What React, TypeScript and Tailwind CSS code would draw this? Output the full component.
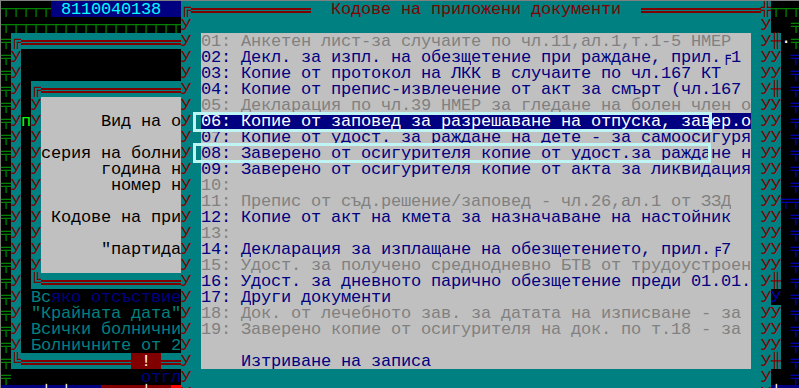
import React from 'react';

type Seg = { t: string; fg: string; bg: string };

const s = (t: string, fg: string, bg: string): Seg => ({ t, fg, bg });

// console palette
const RED = 'text-[#800000]';
const BLU = 'text-[#000080]';
const DIM = 'text-[#808080]';
const WHT = 'text-white';
const CYN = 'text-[#00ffff]';
const GRN = 'text-[#008000]';
const LGRN = 'text-[#00ff00]';
const BLK = 'text-black';
const TEA = 'text-[#008080]';
const DBL = 'text-[#0000b0]';

const BT = 'bg-[#008080]';
const BK = 'bg-black';
const BG = 'bg-[#c0c0c0]';
const BB = 'bg-[#000080]';
const BR = 'bg-[#800000]';
const BRR = 'bg-[#ff0000]';

const TITLE = 'Кодове на приложени документи';

// 0 = disabled, 1 = active, 2 = selected
const items: [string, number][] = [
  ['01: Анкетен лист-за случаите по чл.11,ал.1,т.1-5 НМЕР', 0],
  ['02: Декл. за изпл. на обезщетение при раждане, прил.╒1', 1],
  ['03: Копие от протокол на ЛКК в случаите по чл.167 КТ', 1],
  ['04: Копие от препис-извлечение от акт за смърт (чл.167', 1],
  ['05: Декларация по чл.39 НМЕР за гледане на болен член о', 0],
  ['06: Копие от заповед за разрешаване на отпуска, завер.о', 2],
  ['07: Копие от удост. за раждане на дете - за самоосигуря', 1],
  ['08: Заверено от осигурителя копие от удост.за раждане н', 1],
  ['09: Заверено от осигурителя копие от акта за ликвидация', 1],
  ['10:', 0],
  ['11: Препис от съд.решение/заповед - чл.26,ал.1 от ЗЗД', 0],
  ['12: Копие от акт на кмета за назначаване на настойник', 1],
  ['13:', 0],
  ['14: Декларация за изплащане на обезщетението, прил.╒7', 1],
  ['15: Удост. за получено среднодневно БТВ от трудоустроен', 0],
  ['16: Удост. за дневното парично обезщетение преди 01.01.', 1],
  ['17: Други документи', 1],
  ['18: Док. от лечебното зав. за датата на изписване - за', 0],
  ['19: Заверено копие от осигурителя на док. по т.18 - за', 0],
  ['', 0],
  ['    Изтриване на записа', 1],
];

const formText: Record<number, string> = {
  7: '      Вид на о',
  9: 'серия на болни',
  10: '      година н',
  11: '       номер н',
  13: ' Кодове на при',
  15: '      "партида',
};

const rep = (c: string, n: number) => c.repeat(n);

function leftCols(r: number): Seg[] {
  if (r === 0) return [s(rep('┬', 5), GRN, BK), s(' 8110040138  ', CYN, BB)];
  if (r === 1) return [s(rep('┬', 18), GRN, BK)];
  if (r === 24) return [s('    │ │   ', WHT, BB), s('    │  ', WHT, BR), s(' ', WHT, BRR)];
  const c0 = s('╤', GRN, BK);
  if (r === 23) return [c0, s(rep(' ', 13), BLU, BK), s('отгл', BLU, BK)];
  if (r === 2) return [c0, s('╔', RED, BT), s(rep('═', 16), RED, BT)];
  if (r === 22)
    return [c0, s('╚', RED, BT), s(rep('═', 11), RED, BT), s(' ! ', WHT, BR), s('══', RED, BT)];
  const c1 = s('У', RED, BT);
  if (r === 3 || r === 4) return [c0, c1, s(rep(' ', 16), BLK, BK)];
  const c2 = s(r === 7 ? 'п' : ' ', LGRN, BK);
  if (r === 18) return [c0, c1, c2, s('Вс', TEA, BK), s('яко отсъствие', BLU, BK)];
  if (r === 19) return [c0, c1, c2, s('"Крайната дата"', TEA, BK)];
  if (r === 20) return [c0, c1, c2, s('Всички болнични', TEA, BK)];
  if (r === 21) return [c0, c1, c2, s('Болничните от 2', TEA, BK)];
  if (r === 5) return [c0, c1, c2, s('╔', RED, BT), s(rep('═', 14), RED, BT)];
  if (r === 17) return [c0, c1, c2, s('╚', RED, BT), s(rep('═', 14), RED, BT)];
  const inner = formText[r] ?? '';
  return [c0, c1, c2, s('У', RED, BT), s(inner.padEnd(14), BLK, BG)];
}

function mainCols(r: number): Seg[] {
  if (r === 0)
    return [
      s('╔', RED, BT),
      s(rep('═', 12), RED, BT),
      s('  ', RED, BT),
      s(TITLE, RED, BT),
      s('  ', RED, BT),
      s(rep('═', 12), RED, BT),
    ];
  const edge = s('У', RED, BT);
  if (r === 1 || r >= 23) return [edge, s(rep(' ', 57), RED, BT)];
  const [text, kind] = items[r - 2];
  const fg = kind === 2 ? WHT : kind === 1 ? BLU : DIM;
  const bg = kind === 2 ? BB : BG;
  return [edge, s(' ', RED, BT), s(text.padEnd(55), fg, bg), s(' ', RED, BT)];
}

function rightCols(r: number): Seg[] {
  if (r === 0) return [s('╬', RED, BT), s(rep('┬', 3), GRN, BK)];
  if (r === 1) return [s('У', RED, BT), s('  ', WHT, BK), s('╤', GRN, BK)];
  if (r === 2) return [s('У╫', RED, BT), s('·', WHT, BK), s('╤', GRN, BK)];
  if (r === 24) return [s('У', RED, BT), s('│', WHT, BB), s('  ', WHT, BB)];
  const c77 =
    r === 23
      ? s(' ', RED, BK)
      : r === 18
        ? s('У', DBL, BK)
        : s(r === 5 || r === 17 || r === 22 ? '╫' : 'У', RED, BT);
  return [s('У', RED, BT), c77, s(r === 12 ? '╤' : ' ', DBL, BK), s('╤', DBL, BK)];
}

function Row({ segs }: { segs: Seg[] }) {
  return (
    <div className="flex h-4">
      {segs.flatMap((seg, si) =>
        Array.from(seg.t).map((ch, ci) =>
          ch === '═' ? (
            <span key={`${si}-${ci}`} className={`block w-[10px] h-4 shrink-0 pt-[7px] ${seg.bg}`}>
              <span className="block w-full h-[5px] border-y-2 border-[#800000]" />
            </span>
          ) : (
            <span
              key={`${si}-${ci}`}
              className={`block w-[10px] h-4 shrink-0 pt-[2px] leading-[14px] text-center whitespace-pre ${seg.fg} ${seg.bg}`}
            >
              {ch}
            </span>
          ),
        ),
      )}
    </div>
  );
}

export default function App() {
  const rows = Array.from({ length: 25 }, (_, r) => [...leftCols(r), ...mainCols(r), ...rightCols(r)]);

  return (
    <div className="relative w-[799px] h-[388px] overflow-hidden bg-black border-t border-l border-[#808080] font-['Liberation_Mono','DejaVu_Sans_Mono',monospace] text-[17px]">
      {rows.map((segs, r) => (
        <Row key={r} segs={segs} />
      ))}

      {/* focus frames over rows 06 and 08 */}
      <div className="absolute left-[192px] top-[111px] w-[519px] h-[20px] border-[3px] border-[#bff4f4]" />
      <div className="absolute left-[192px] top-[142px] w-[518px] h-[20px] border-[3px] border-[#bff4f4]" />
    </div>
  );
}
